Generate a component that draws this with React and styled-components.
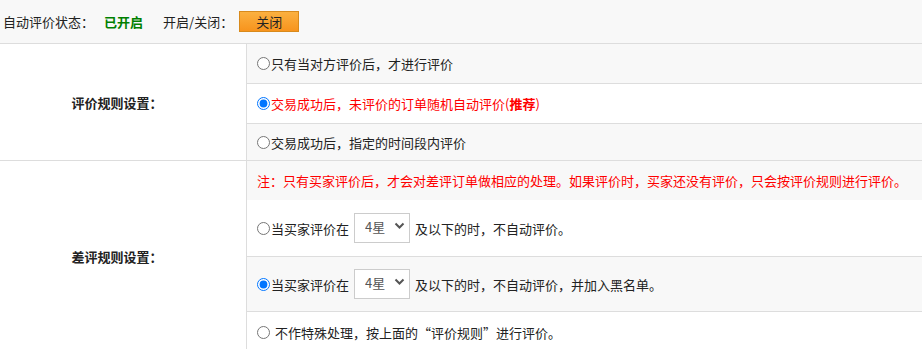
import styled, { createGlobalStyle } from "styled-components";

const Global = createGlobalStyle`
  body {
    margin: 0;
    font-family: "Noto Sans CJK SC", "Noto Sans", sans-serif;
    font-size: 13px;
    color: #222;
    background: #fff;
  }
`;

const TopBar = styled.div`
  display: flex;
  align-items: center;
  height: 43px;
  padding-left: 3px;
  background: #f8f8f8;
  border-bottom: 1px solid #ddd;
`;

const Label = styled.span`
  margin-right: ${(p) => p.$gap || 0}px;
`;

const Status = styled.span`
  color: #008000;
  font-weight: bold;
  margin-right: 20px;
`;

const OrangeBtn = styled.button`
  width: 60px;
  height: 21px;
  padding: 0;
  font-family: inherit;
  font-size: 13px;
  color: #222;
  background: linear-gradient(#fbb040, #f7941d);
  border: 1px solid #d88a1c;
  cursor: pointer;
`;

const Section = styled.div`
  display: grid;
  grid-template-columns: 247px 1fr;
  border-bottom: 1px solid #ddd;
`;

const SideLabel = styled.div`
  display: flex;
  align-items: center;
  justify-content: center;
  padding-right: 12px;
  font-weight: bold;
  border-right: 1px solid #ddd;
`;

const Rows = styled.div`
  display: flex;
  flex-direction: column;
`;

const Row = styled.label`
  display: flex;
  align-items: center;
  height: ${(p) => p.$h}px;
  padding-left: 8px;
  background: ${(p) => (p.$gray ? "#f8f8f8" : "#fff")};
  color: ${(p) => (p.$red ? "#f00" : "#222")};
  & + & {
    border-top: 1px solid #ddd;
  }
`;

const Radio = styled.input.attrs({ type: "radio" })`
  width: 13px;
  height: 13px;
  margin: 0 ${(p) => p.$space || 1}px 0 2px;
  accent-color: #0075ff;
`;

const Note = styled.div`
  display: flex;
  align-items: center;
  height: 39px;
  padding-left: 10px;
  background: #f8f8f8;
  color: #f00;
`;

const SelectWrap = styled.span`
  position: relative;
  display: inline-flex;
  margin: 0 5px 0 5px;
  svg {
    position: absolute;
    right: 5px;
    top: 9px;
    pointer-events: none;
  }
`;

const Select = styled.select`
  appearance: none;
  width: 56px;
  height: 30px;
  padding: 0 0 4px 10px;
  font-family: inherit;
  font-size: 13px;
  color: #555;
  background: #fff;
  border: 1px solid #ccc;
  border-radius: 0;
`;

function StarSelect() {
  return (
    <SelectWrap>
      <Select defaultValue="4">
        <option value="1">1星</option>
        <option value="2">2星</option>
        <option value="3">3星</option>
        <option value="4">4星</option>
      </Select>
      <svg width="11" height="8" viewBox="0 0 11 8">
        <path d="M1.5 1.5 L5.5 5.5 L9.5 1.5" fill="none" stroke="#555" strokeWidth="2" />
      </svg>
    </SelectWrap>
  );
}

export default function App() {
  return (
    <>
      <Global />
      <TopBar>
        <Label $gap={10}>自动评价状态：</Label>
        <Status>已开启</Status>
        <Label $gap={6}>开启/关闭：</Label>
        <OrangeBtn>关闭</OrangeBtn>
      </TopBar>

      <Section>
        <SideLabel>评价规则设置：</SideLabel>
        <Rows>
          <Row $h={39} $gray>
            <Radio name="rule" />只有当对方评价后，才进行评价
          </Row>
          <Row $h={39} $red>
            <Radio name="rule" defaultChecked />
            交易成功后，未评价的订单随机自动评价(<b>推荐</b>)
          </Row>
          <Row $h={36} $gray>
            <Radio name="rule" />交易成功后，指定的时间段内评价
          </Row>
        </Rows>
      </Section>

      <Section>
        <SideLabel>差评规则设置：</SideLabel>
        <Rows>
          <Note>注：只有买家评价后，才会对差评订单做相应的处理。如果评价时，买家还没有评价，只会按评价规则进行评价。</Note>
          <Row $h={56}>
            <Radio name="bad" />当买家评价在
            <StarSelect />
            及以下的时，不自动评价。
          </Row>
          <Row $h={54} $gray>
            <Radio name="bad" defaultChecked />当买家评价在
            <StarSelect />
            及以下的时，不自动评价，并加入黑名单。
          </Row>
          <Row $h={40}>
            <Radio name="bad" $space={5} />不作特殊处理，按上面的“评价规则”进行评价。
          </Row>
        </Rows>
      </Section>
    </>
  );
}
